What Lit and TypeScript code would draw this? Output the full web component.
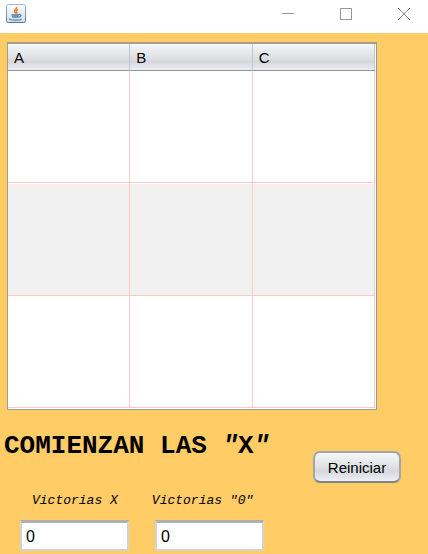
import { LitElement, html, css } from "lit";
import { customElement, state } from "lit/decorators.js";

@customElement("app-root")
export class AppRoot extends LitElement {
  @state() private columns = ["A", "B", "C"];
  @state() private rows = [0, 1, 2];

  static styles = css`
    :host {
      display: block;
      min-height: 100vh;
      background: #ffcc66;
      color: #000;
      font: 15px "Liberation Sans", Arial, sans-serif;
    }
    * {
      box-sizing: border-box;
    }
    .titlebar {
      display: flex;
      justify-content: space-between;
      height: 33px;
      padding: 4px 13px 0 6px;
      background: #fff;
    }
    .window-buttons {
      display: flex;
      align-items: flex-start;
      gap: 36px;
      padding-top: 3px;
    }
    .window-button {
      display: block;
      width: 22px;
      height: 14px;
      padding: 0 4px;
      border: 0;
      background: none;
    }
    svg {
      display: block;
    }
    .board-frame {
      margin: 9px 51px 0 7px;
      padding-bottom: 1px;
      padding-right: 1px;
      border: 1px solid #a39d8c;
      border-top: 2px solid #a39d8c;
      border-right-color: #98989a;
      background: #fff;
    }
    .board {
      width: 100%;
      table-layout: fixed;
      border-spacing: 0;
    }
    .board th {
      height: 27px;
      padding: 0 0 0 6px;
      border-right: 1px solid #c3c5cc;
      border-bottom: 1px solid #8f929c;
      background: linear-gradient(#f5f6f7, #e2e3e6 45%, #d6d8dd 70%, #e9edf5);
      font-weight: 400;
      text-align: left;
    }
    .board td {
      height: 112px;
      padding: 0;
      border-right: 1px solid #ffc8c8;
      border-bottom: 1px solid #ffc8c8;
    }
    .board tbody tr:nth-child(even) td {
      height: 113px;
      background: #f1f1f1;
      box-shadow: inset 0 1px #fff;
    }
    .footer {
      display: flex;
      justify-content: space-between;
      align-items: flex-start;
      padding: 19px 27px 4px 4px;
    }
    .turn {
      margin: 0;
      font: 700 26px/34px "Liberation Mono", "Courier New", monospace;
      white-space: nowrap;
    }
    .quote {
      font-style: italic;
    }
    .labels {
      display: flex;
      gap: 34px;
      padding: 30px 0 0 28px;
      font: italic 13px/16px "Liberation Mono", "Courier New", monospace;
      white-space: nowrap;
    }
    .scores {
      display: flex;
      gap: 26px;
      padding: 11px 0 0 16px;
    }
    .score {
      width: 109px;
      height: 31px;
      padding: 2px 4px 0;
      border: 2px solid #d3d3d0;
      border-top: 3px solid #b0b0b0;
      border-radius: 0;
      background: #fff;
      color: #000;
      font: 16px "Liberation Sans", Arial, sans-serif;
    }
    .restart {
      width: 88px;
      height: 32px;
      margin-top: 22px;
      padding: 0;
      border: 2px solid #a4a5a8;
      border-bottom-color: #808185;
      border-radius: 7px;
      background: linear-gradient(#f6f7f8, #e2e3e6 45%, #d5d7dc 65%, #edf0f6);
      color: #000;
      font: 15px "Liberation Sans", Arial, sans-serif;
    }
  `;

  render() {
    return html`
      <header class="titlebar">
        <svg width="20" height="20" viewBox="0 0 20 20" aria-label="Java">
          <defs>
            <linearGradient id="tile" x2="0" y2="1">
              <stop stop-color="#fdfdfe" />
              <stop offset="1" stop-color="#d4dde5" />
            </linearGradient>
            <linearGradient id="edge" x2="0" y2="1">
              <stop stop-color="#a9b7c3" />
              <stop offset="1" stop-color="#4e7593" />
            </linearGradient>
          </defs>
          <rect x=".5" y=".5" width="19" height="18" rx="2" fill="url(#tile)" stroke="url(#edge)" />
          <path d="M10.500 3c1 2-2.500 2.500-2 4.500.2 1 1 1.200 1.500 2M12 5.500c-2 1-2 1.800-1.300 2.500.5.6.2 1.200-.4 1.600" fill="none" stroke="#e98635" stroke-width="1.500" />
          <path d="M5.500 10.300h7.500l-.8 3.200q-3 1.200-6 0z" fill="#86a6bf" />
          <path d="M5.500 10.500c1 .9 6.500.8 7.500 0M6 12.500c2 .8 4.500 .8 6.500 0M13 10.500c3-.5 2.500 2-.4 2.800M3.500 14.600c-.6 2 10.500 2.200 12 .2" fill="none" stroke="#5f89a8" stroke-width="1.200" />
        </svg>
        <div class="window-buttons">
          <button class="window-button" aria-label="Minimizar">
            <svg width="14" height="14"><path d="M1 6.500h12" stroke="#999" /></svg>
          </button>
          <button class="window-button" aria-label="Maximizar">
            <svg width="14" height="14"><rect x="1.500" y="1.500" width="11" height="11" fill="none" stroke="#999" /></svg>
          </button>
          <button class="window-button" aria-label="Cerrar">
            <svg width="14" height="14"><path d="M1 1l12 12M13 1L1 13" stroke="#888" /></svg>
          </button>
        </div>
      </header>
      <main>
        <div class="board-frame">
          <table class="board">
            <thead>
              <tr>${this.columns.map((c) => html`<th scope="col">${c}</th>`)}</tr>
            </thead>
            <tbody>
              ${this.rows.map(() => html`<tr>${this.columns.map(() => html`<td></td>`)}</tr>`)}
            </tbody>
          </table>
        </div>
        <section class="footer">
          <div>
            <h1 class="turn">COMIENZAN LAS <span class="quote">"</span>X<span class="quote">"</span></h1>
            <div class="labels">
              <label for="wins-x">Victorias X</label>
              <label for="wins-o">Victorias "0"</label>
            </div>
            <div class="scores">
              <input class="score" id="wins-x" type="text" value="0" />
              <input class="score" id="wins-o" type="text" value="0" />
            </div>
          </div>
          <button class="restart">Reiniciar</button>
        </section>
      </main>
    `;
  }
}
